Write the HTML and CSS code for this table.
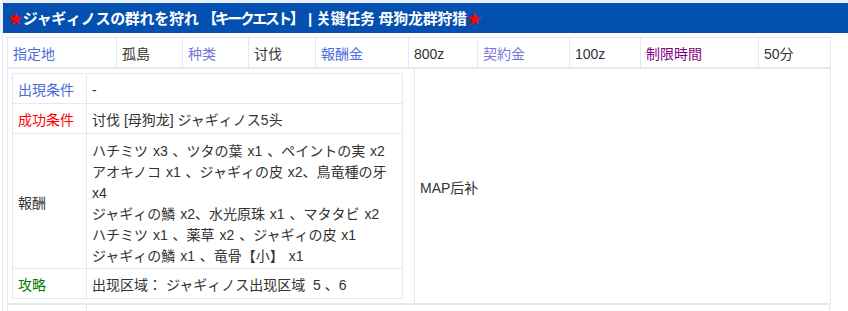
FILE: index.html
```html
<!DOCTYPE html>
<html lang="ja">
<head>
    <meta charset="UTF-8">
    <meta name="viewport" content="width=device-width, initial-scale=1.0">
    <title>ジャギィノスの群れを狩れ</title>
    <link rel="stylesheet" href="styles.css">
</head>
<body>
    <div class="quest">
        <div class="quest-title"><span class="star">★</span>ジャギィノスの群れを狩れ <span class="quest-tag">【キークエスト】</span> | 关键任务 母狗龙群狩猎<span class="star">★</span></div>

        <div class="quest-body">
            <!-- 基本信息 -->
            <table class="info">
                <colgroup>
                    <col style="width:109px"><col style="width:66px"><col style="width:66px"><col style="width:67px">
                    <col style="width:93px"><col style="width:69px"><col style="width:92px"><col style="width:71px">
                    <col style="width:118px"><col style="width:72px">
                </colgroup>
                <tr>
                    <td class="lbl-blue">指定地</td>
                    <td>孤島</td>
                    <td class="lbl-violet">种类</td>
                    <td>讨伐</td>
                    <td class="lbl-blue">報酬金</td>
                    <td>800z</td>
                    <td class="lbl-violet">契約金</td>
                    <td>100z</td>
                    <td class="lbl-purple">制限時間</td>
                    <td>50分</td>
                </tr>
            </table>

            <!-- 条件 / 报酬 / 地图 -->
            <table class="detail">
                <colgroup>
                    <col style="width:407px"><col style="width:416px">
                </colgroup>
                <tr>
                    <td class="detail-main">
                        <table class="cond">
                            <colgroup>
                                <col style="width:74px"><col>
                            </colgroup>
                            <tr>
                                <td class="lbl-blue">出現条件</td>
                                <td>-</td>
                            </tr>
                            <tr>
                                <td class="lbl-red">成功条件</td>
                                <td>讨伐 [母狗龙] ジャギィノス5头</td>
                            </tr>
                            <tr>
                                <td>報酬</td>
                                <td class="reward">
                                    ハチミツ x3 、ツタの葉 x1 、ペイントの実 x2<br>
                                    アオキノコ x1 、ジャギィの皮 x2、鳥竜種の牙 x4<br>
                                    ジャギィの鱗 x2、水光原珠 x1 、マタタビ x2<br>
                                    ハチミツ x1 、薬草 x2 、ジャギィの皮 x1<br>
                                    ジャギィの鱗 x1 、竜骨【小】 x1
                                </td>
                            </tr>
                            <tr>
                                <td class="lbl-green">攻略</td>
                                <td>出现区域： ジャギィノス出现区域&nbsp; 5 、6</td>
                            </tr>
                        </table>
                    </td>
                    <td class="map">MAP后补</td>
                </tr>
            </table>

            <table class="next">
                <colgroup>
                    <col style="width:79px"><col>
                </colgroup>
                <tr>
                    <td></td>
                    <td></td>
                </tr>
            </table>
        </div>
    </div>
</body>
</html>
```

FILE: styles.css
```css
body {
    margin: 0;
    padding: 0;
    font-family: "Liberation Sans", "Noto Sans CJK SC", sans-serif;
    font-size: 14px;
    color: #333;
    background-color: #fff;
}

.quest {
    margin-left: 2px;
    border-top: 3px solid #e9eff6;
    border-left: 1px solid #e1e9f3;
}

.quest-title {
    height: 30px;
    line-height: 31px;
    padding-left: 5px;
    background-color: #0450b0;
    color: #fff;
    font-size: 15px;
    font-weight: bold;
    letter-spacing: -0.3px;
    white-space: nowrap;
    box-shadow: -3px 0 0 #e9eff6;
}

.quest-tag {
    letter-spacing: -2.5px;
    margin-right: 2px;
}

.star {
    color: #ff0000;
}

.quest-body {
    padding: 4px 0 0 4px;
}

table {
    border-collapse: collapse;
    table-layout: fixed;
}

td {
    border: 1px solid #e1e9f3;
    padding: 6px 5px 2px;
    line-height: 21px;
    vertical-align: middle;
}

.info,
.detail,
.next {
    width: 823px;
}

.detail-main {
    padding: 4px 11px 4px 4px;
    vertical-align: top;
}

.cond {
    width: 391px;
}

.reward {
    padding-top: 7px;
    padding-bottom: 1px;
    word-spacing: 1px;
}

.map {
    padding: 4px 5px 0;
}

.next td {
    height: 20px;
}

/* 标签颜色 */
.lbl-blue {
    color: #4d6bd9;
}

.lbl-violet {
    color: #7a74dc;
}

.lbl-purple {
    color: #800080;
}

.lbl-red {
    color: #ff0000;
}

.lbl-green {
    color: #008000;
}
```
